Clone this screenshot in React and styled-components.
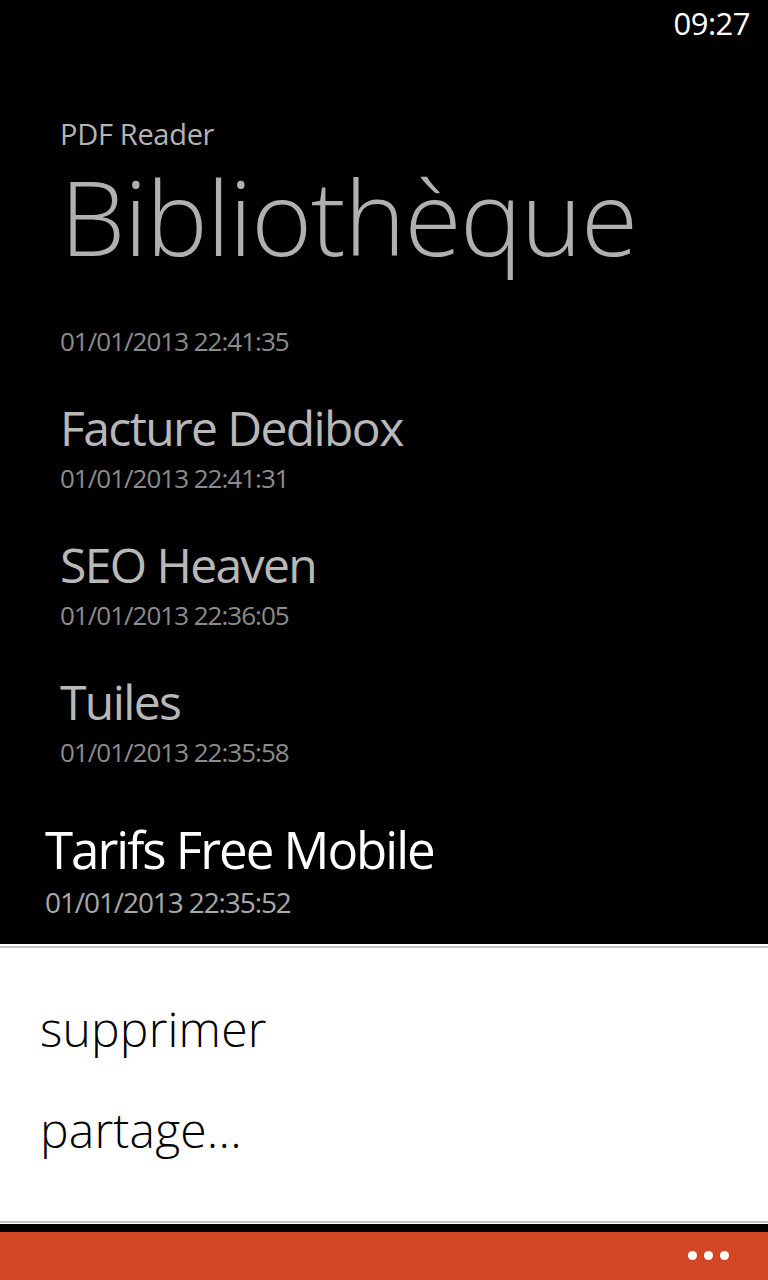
import React from "react";
import styled, { createGlobalStyle } from "styled-components";

const Global = createGlobalStyle`
  html, body { margin: 0; padding: 0; background: #000; }
  body { font-family: "Open Sans", "Noto Sans", sans-serif; }
  * { box-sizing: border-box; }
`;

const Screen = styled.div`
  width: 768px;
  height: 1280px;
  display: flex;
  flex-direction: column;
  background: #000;
  overflow: hidden;
`;

const Content = styled.div`
  flex: 1;
  display: flex;
  flex-direction: column;
  overflow: hidden;
`;

const StatusBar = styled.div`
  height: 48px;
  display: flex;
  justify-content: flex-end;
  align-items: flex-start;
  padding: 3px 18px 0 0;
`;

const Clock = styled.span`
  font-size: 31px;
  line-height: 40px;
  color: #fff;
  font-weight: 400;
  letter-spacing: -0.5px;
`;

const Header = styled.header`
  padding: 68px 0 0 60px;
  display: flex;
  flex-direction: column;
  gap: 9px;
`;

const AppName = styled.div`
  font-size: 29px;
  line-height: 36px;
  color: #b4b4b4;
  letter-spacing: -0.3px;
`;

const PageTitle = styled.h1`
  margin: 0;
  font-size: 104px;
  line-height: 110px;
  font-weight: 300;
  color: #b0b0b0;
  letter-spacing: -1.3px;
`;

const List = styled.div`
  display: flex;
  flex-direction: column;
  margin-top: -8px;
`;

const Item = styled.div`
  display: flex;
  flex-direction: column;
  padding-left: ${(p) => (p.$lifted ? "45px" : "60px")};
  margin-top: ${(p) => (p.$lifted ? "8px" : "0")};
  margin-bottom: ${(p) => (p.$lifted ? "0" : "41.5px")};
`;

const ItemTitle = styled.div`
  font-size: ${(p) => (p.$lifted ? "51px" : "48px")};
  line-height: ${(p) => (p.$lifted ? "60px" : "56px")};
  height: ${(p) => (p.$lifted ? "60px" : "56px")};
  color: ${(p) => (p.$lifted ? "#ffffff" : "#b8b8b8")};
  letter-spacing: ${(p) => (p.$lifted ? "-2px" : "-1.6px")};
  white-space: nowrap;
`;

const ItemDate = styled.div`
  margin-top: 3.5px;
  font-size: ${(p) => (p.$lifted ? "28px" : "26px")};
  line-height: ${(p) => (p.$lifted ? "38px" : "36px")};
  color: ${(p) => (p.$lifted ? "#a8a8a8" : "#8c8c8c")};
  letter-spacing: ${(p) => (p.$lifted ? "-1.1px" : "-1px")};
  white-space: nowrap;
`;

const Menu = styled.div`
  height: 280px;
  background: #fff;
  padding-top: 2px;
  padding-bottom: 1px;
  display: flex;
  flex-direction: column;
`;

const MenuRule = styled.div`
  height: 2px;
  background: #c4c4c4;
  flex: none;
`;

const MenuItems = styled.div`
  flex: 1;
  padding: 30px 0 0 40px;
  display: flex;
  flex-direction: column;
`;

const MenuItem = styled.div`
  font-size: 48px;
  line-height: 101px;
  font-weight: 300;
  color: #000;
  letter-spacing: 0.2px;
`;

const Gap = styled.div`
  height: 8px;
  background: #000;
  flex: none;
`;

const AppBar = styled.div`
  height: 48px;
  background: #d24726;
  display: flex;
  justify-content: flex-end;
  align-items: center;
  padding: 0 39px 2px 0;
  flex: none;
`;

const Dots = styled.div`
  display: flex;
  gap: 7px;
`;

const Dot = styled.span`
  width: 9px;
  height: 9px;
  border-radius: 50%;
  background: #fff;
`;

const docs = [
  { title: "", date: "01/01/2013 22:41:35" },
  { title: "Facture Dedibox", date: "01/01/2013 22:41:31" },
  { title: "SEO Heaven", date: "01/01/2013 22:36:05" },
  { title: "Tuiles", date: "01/01/2013 22:35:58" },
];

export default function App() {
  return (
    <>
      <Global />
      <Screen>
        <Content>
          <StatusBar>
            <Clock>09:27</Clock>
          </StatusBar>
          <Header>
            <AppName>PDF Reader</AppName>
            <PageTitle>Bibliothèque</PageTitle>
          </Header>
          <List>
            {docs.map((d, i) => (
              <Item key={i}>
                <ItemTitle>{d.title}</ItemTitle>
                <ItemDate>{d.date}</ItemDate>
              </Item>
            ))}
            <Item $lifted>
              <ItemTitle $lifted>Tarifs Free Mobile</ItemTitle>
              <ItemDate $lifted>01/01/2013 22:35:52</ItemDate>
            </Item>
          </List>
        </Content>
        <Menu>
          <MenuRule />
          <MenuItems>
            <MenuItem>supprimer</MenuItem>
            <MenuItem>partage...</MenuItem>
          </MenuItems>
          <MenuRule />
        </Menu>
        <Gap />
        <AppBar>
          <Dots>
            <Dot />
            <Dot />
            <Dot />
          </Dots>
        </AppBar>
      </Screen>
    </>
  );
}
